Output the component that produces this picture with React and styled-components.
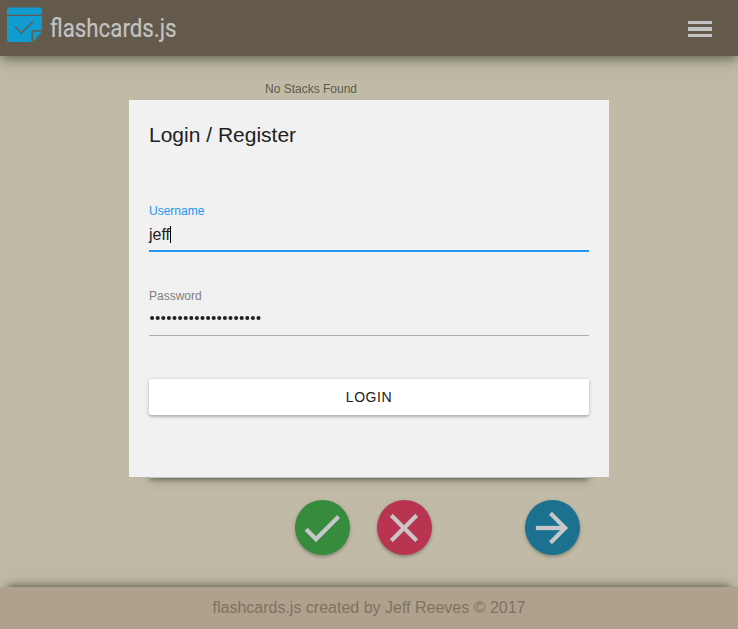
import React from 'react';
import styled, { createGlobalStyle } from 'styled-components';

const GlobalStyle = createGlobalStyle`
  * { box-sizing: border-box; }
  body { margin: 0; font-family: "Liberation Sans", Arial, sans-serif; }
`;

const Page = styled.div`
  position: relative;
  display: flex;
  flex-direction: column;
  height: 629px;
  overflow: hidden;
  background: #c0baa6;
`;

const Header = styled.header`
  display: flex;
  align-items: center;
  justify-content: space-between;
  height: 56px;
  flex: none;
  padding: 0 26px 0 7px;
  background: #645a4b;
  box-shadow: 0 8px 16px -2px rgba(108, 126, 86, 0.25), 0 5px 9px -2px rgba(40, 44, 32, 0.55);
`;

const Brand = styled.div`
  display: flex;
  align-items: flex-start;
  height: 56px;
  padding-top: 7px;
`;

const BrandName = styled.span`
  margin: 5px 0 0 8px;
  font: 400 26px/32px Roboto, sans-serif;
  color: #c3c3c3;
  -webkit-text-stroke: 0.2px #c3c3c3;
  white-space: nowrap;
  transform: scaleX(0.858);
  transform-origin: 0 50%;
`;

const MenuButton = styled.button`
  display: flex;
  flex-direction: column;
  gap: 3px;
  width: 24px;
  margin-top: 2px;
  padding: 0;
  border: 0;
  background: none;
`;

const MenuBar = styled.span`
  height: ${(p) => (p.$middle ? 4 : 3)}px;
  background: #c3c3c3;
`;

const Main = styled.main`
  display: flex;
  flex-direction: column;
  flex: 1;
  width: 440px;
  margin-left: 149px;
  padding-top: 25px;
`;

const Status = styled.p`
  margin: 0 0 0 116px;
  font-size: 12px;
  line-height: 16px;
  color: #5b5d50;
`;

const Card = styled.section`
  height: 371px;
  margin-top: 10px;
  background: #c3c3c3;
  box-shadow: 0 5px 10px -2px rgba(108, 126, 86, 0.25), 0 3px 5px -1px rgba(40, 44, 32, 0.55);
`;

const Controls = styled.div`
  display: flex;
  margin: 22px 0 0 146px;
`;

const RoundButton = styled.button`
  display: grid;
  place-items: center;
  width: 55px;
  height: 55px;
  margin-right: ${(p) => p.$after || 0}px;
  padding: 1px 1px 0 0;
  border: 0;
  border-radius: 50%;
  background: ${(p) => p.$color};
  box-shadow: 0 2px 3px rgba(0, 0, 0, 0.2), 0 1px 5px rgba(0, 0, 0, 0.1);
`;

const Footer = styled.footer`
  display: grid;
  place-items: center;
  height: 42px;
  flex: none;
  font-size: 16px;
  line-height: 20px;
  color: #7e7262;
  background: #afa18b;
  box-shadow: 0 -10px 16px -6px rgba(108, 126, 86, 0.2), 0 -8px 8px -8px rgba(40, 44, 32, 0.85);
`;

const Dialog = styled.form`
  position: absolute;
  top: 100px;
  left: 129px;
  width: 480px;
  height: 377px;
  padding: 22px 20px 0;
  background: #f1f1f1;
  color: #212121;
`;

const Title = styled.h2`
  margin: 0 0 55px;
  font-size: 21px;
  font-weight: 400;
  line-height: 26px;
`;

const Field = styled.div`
  display: flex;
  flex-direction: column;
  height: ${(p) => (p.$active ? 49 : 48)}px;
  margin-bottom: ${(p) => p.$after}px;
  border-bottom: ${(p) => (p.$active ? '2px solid #2196f3' : '1px solid #adadad')};
  color: ${(p) => (p.$active ? '#2196f3' : '#808080')};
`;

const Label = styled.label`
  font-size: 12px;
  line-height: 17px;
`;

const Value = styled.div`
  display: flex;
  align-items: center;
  height: 29px;
  font-size: 16px;
  color: #212121;
`;

const Caret = styled.span`
  width: 1px;
  height: 17px;
  background: #000;
`;

const Dots = styled.svg`
  margin-top: -3px;
  fill: #212121;
`;

const LoginButton = styled.button`
  display: block;
  width: 440px;
  height: 36px;
  padding: 0;
  border: 0;
  border-radius: 2px;
  background: #fff;
  color: #212121;
  font: 400 14px/36px "Liberation Sans", Arial, sans-serif;
  letter-spacing: 0.56px;
  box-shadow: 0 2px 2px rgba(0, 0, 0, 0.14), 0 1px 4px rgba(0, 0, 0, 0.2);
`;

function Logo() {
  return (
    <svg width="35" height="35" viewBox="0 0 35 35">
      <path d="M0 7.7V3Q0 .5 2.5.5h30Q35 .5 35 3v4.7z" fill="#109cd0" />
      <path d="M0 9h35v14h-8q-2.5 0-2.5 2.5V35h-22Q0 35 0 32.5z" fill="#109cd0" />
      <path d="M26 35v-9q0-1.5 1.5-1.5H35z" fill="#109cd0" />
      <path d="M8 19.5l6.5 6.5 11.5-11.5" fill="none" stroke="#645a4b" strokeWidth="1.4" />
    </svg>
  );
}

function Glyph({ d }) {
  return (
    <svg width="48" height="48" viewBox="0 0 24 24" fill="#c8c8c8" stroke="#c8c8c8" strokeWidth="0.15">
      <path d={d} />
    </svg>
  );
}

function PasswordDots({ count }) {
  return (
    <Dots width="114" height="8">
      {Array.from({ length: count }, (_, i) => (
        <circle key={i} cx={3.1 + i * 5.6} cy="4" r="2.05" />
      ))}
    </Dots>
  );
}

export default function App() {
  return (
    <Page>
      <GlobalStyle />
      <Header>
        <Brand>
          <Logo />
          <BrandName>flashcards.js</BrandName>
        </Brand>
        <MenuButton type="button" aria-label="Menu">
          <MenuBar />
          <MenuBar $middle />
          <MenuBar />
        </MenuButton>
      </Header>
      <Main>
        <Status>No Stacks Found</Status>
        <Card />
        <Controls>
          <RoundButton $color="#368b3d" $after={27} aria-label="Correct">
            <Glyph d="M9 16.17L4.83 12l-1.42 1.41L9 19 21 7l-1.41-1.41z" />
          </RoundButton>
          <RoundButton $color="#b93450" $after={93} aria-label="Incorrect">
            <Glyph d="M19 6.41L17.59 5 12 10.59 6.41 5 5 6.41 10.59 12 5 17.59 6.41 19 12 13.41 17.59 19 19 17.59 13.41 12z" />
          </RoundButton>
          <RoundButton $color="#1c7191" aria-label="Next">
            <Glyph d="M12 4l-1.41 1.41L16.17 11H4v2h12.17l-5.58 5.59L12 20l8-8z" />
          </RoundButton>
        </Controls>
      </Main>
      <Footer>flashcards.js created by Jeff Reeves © 2017</Footer>
      <Dialog>
        <Title>Login / Register</Title>
        <Field $active $after={36}>
          <Label>Username</Label>
          <Value>
            jeff
            <Caret />
          </Value>
        </Field>
        <Field $after={43}>
          <Label>Password</Label>
          <Value>
            <PasswordDots count={20} />
          </Value>
        </Field>
        <LoginButton type="button">LOGIN</LoginButton>
      </Dialog>
    </Page>
  );
}
